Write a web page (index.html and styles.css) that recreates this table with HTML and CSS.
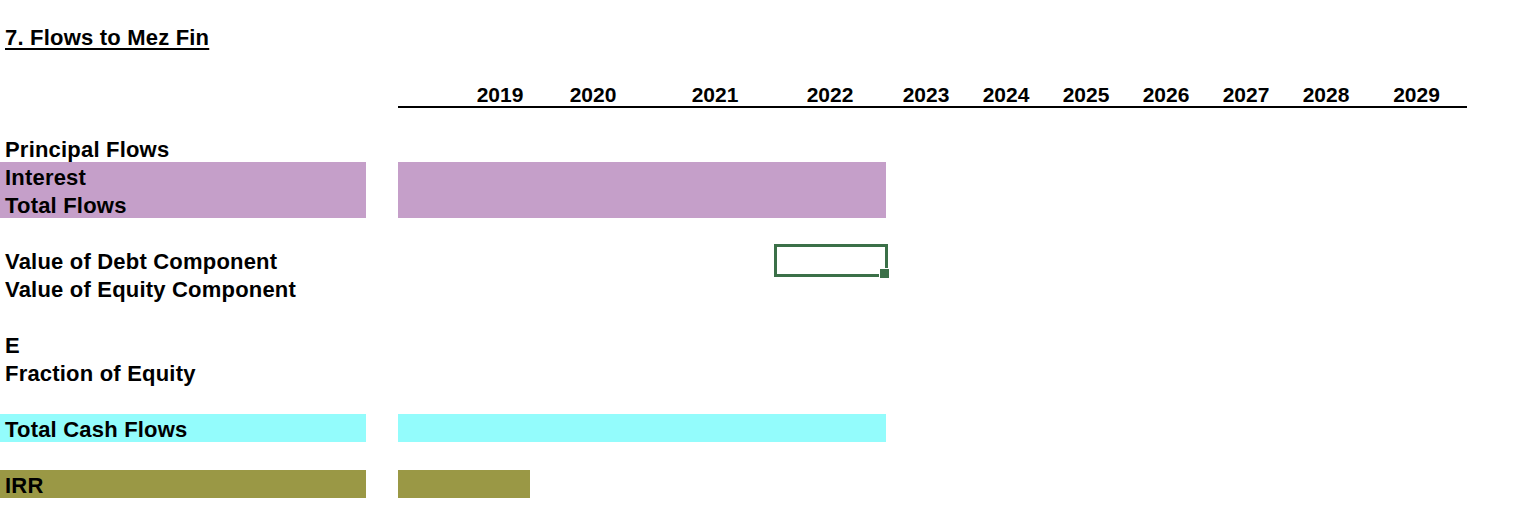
FILE: index.html
```html
<!DOCTYPE html>
<html lang="en">
<head>
    <meta charset="UTF-8">
    <title>7. Flows to Mez Fin</title>
    <link rel="stylesheet" href="styles.css">
</head>
<body>

    <!-- sheet -->
    <div class="sheet">
        <div class="row">
            <div class="label title">7. Flows to Mez Fin</div>
        </div>
        <div class="row"></div>

        <!-- years -->
        <div class="row header">
            <div class="years">
                <span></span>
                <span>2019</span>
                <span>2020</span>
                <span>2021</span>
                <span>2022</span>
                <span>2023</span>
                <span>2024</span>
                <span>2025</span>
                <span>2026</span>
                <span>2027</span>
                <span>2028</span>
                <span>2029</span>
            </div>
        </div>
        <div class="row"></div>

        <div class="row">
            <div class="label">Principal Flows</div>
        </div>
        <div class="row">
            <div class="label purple">Interest</div>
            <div class="data purple"></div>
        </div>
        <div class="row">
            <div class="label purple">Total Flows</div>
            <div class="data purple"></div>
        </div>
        <div class="row"></div>

        <div class="row">
            <div class="label">Value of Debt Component</div>
            <div class="selected"><span class="handle"></span></div>
        </div>
        <div class="row">
            <div class="label">Value of Equity Component</div>
        </div>
        <div class="row"></div>

        <div class="row">
            <div class="label">E</div>
        </div>
        <div class="row">
            <div class="label">Fraction of Equity</div>
        </div>
        <div class="row"></div>

        <div class="row">
            <div class="label cyan">Total Cash Flows</div>
            <div class="data cyan"></div>
        </div>
        <div class="row"></div>

        <div class="row">
            <div class="label olive">IRR</div>
            <div class="data short olive"></div>
        </div>
    </div>

</body>
</html>
```

FILE: styles.css
```css
body, html {
    margin: 0;
    padding: 0;
    background-color: white;
    color: black;
    font-family: "Liberation Sans", Arial, sans-serif;
    font-weight: bold;
    font-size: 22px;
}

.sheet {
    padding-top: 22px;
}

/* 列宽：A | 空 | B..M */
.row {
    display: grid;
    grid-template-columns: 366px 32px 72px 60px 126px 118px 112px 80px 80px 80px 80px 80px 80px 101px;
    height: 28px;
}

.label {
    grid-column: 1;
    display: flex;
    align-items: flex-end;
    padding: 0 0 1px 5px;
    line-height: 22px;
    letter-spacing: 0.2px;
    white-space: nowrap;
}

.title {
    text-decoration: underline;
    text-underline-offset: 3px;
    text-decoration-thickness: 2px;
}

.data {
    grid-column: 3 / 8;
}

.data.short {
    grid-column: 3 / 5;
}

.purple {
    background-color: #c59fc9;
}

.cyan {
    background-color: #93fcfc;
}

.olive {
    background-color: #9a9845;
}

/* 年份表头 */
.years {
    grid-column: 3 / 15;
    display: grid;
    grid-template-columns: subgrid;
    border-bottom: 2px solid black;
    height: 28px;
}

.years span {
    display: flex;
    align-items: flex-end;
    justify-content: center;
    padding-bottom: 0;
    font-size: 21px;
    line-height: 22px;
}

/* 选中单元格 */
.selected {
    grid-column: 7;
    position: relative;
}

.selected::before {
    content: "";
    position: absolute;
    top: -2px;
    left: 0;
    right: -2px;
    bottom: -3px;
    border: 3px solid #3b7048;
}

.handle {
    position: absolute;
    right: -4px;
    bottom: -5px;
    width: 9px;
    height: 9px;
    background-color: #3b7048;
    border: 1px solid white;
}
```
